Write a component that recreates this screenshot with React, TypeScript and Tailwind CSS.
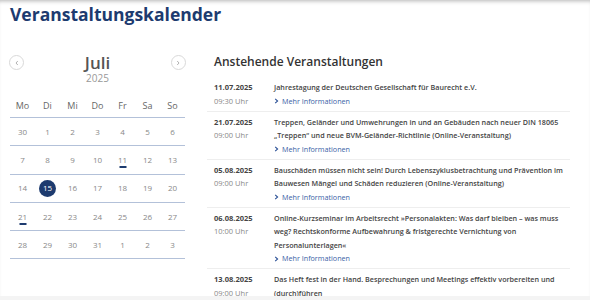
import React from "react";

const weeks: { d: number; today?: boolean; mark?: boolean }[][] = [
  [{ d: 30 }, { d: 1 }, { d: 2 }, { d: 3 }, { d: 4 }, { d: 5 }, { d: 6 }],
  [{ d: 7 }, { d: 8 }, { d: 9 }, { d: 10 }, { d: 11, mark: true }, { d: 12 }, { d: 13 }],
  [{ d: 14 }, { d: 15, today: true }, { d: 16 }, { d: 17 }, { d: 18 }, { d: 19 }, { d: 20 }],
  [{ d: 21, mark: true }, { d: 22 }, { d: 23 }, { d: 24 }, { d: 25 }, { d: 26 }, { d: 27 }],
  [{ d: 28 }, { d: 29 }, { d: 30 }, { d: 31 }, { d: 1 }, { d: 2 }, { d: 3 }],
];

const events = [
  {
    date: "11.07.2025",
    time: "09:30 Uhr",
    title: ["Jahrestagung der Deutschen Gesellschaft für Baurecht e.V."],
  },
  {
    date: "21.07.2025",
    time: "09:00 Uhr",
    title: [
      "Treppen, Geländer und Umwehrungen in und an Gebäuden nach neuer DIN 18065",
      "„Treppen“ und neue BVM-Geländer-Richtlinie (Online-Veranstaltung)",
    ],
  },
  {
    date: "05.08.2025",
    time: "09:00 Uhr",
    title: [
      "Bauschäden müssen nicht sein! Durch Lebenszyklusbetrachtung und Prävention im",
      "Bauwesen Mängel und Schäden reduzieren (Online-Veranstaltung)",
    ],
  },
  {
    date: "06.08.2025",
    time: "10:00 Uhr",
    title: [
      "Online-Kurzseminar im Arbeitsrecht »Personalakten: Was darf bleiben – was muss",
      "weg? Rechtskonforme Aufbewahrung & fristgerechte Vernichtung von",
      "Personalunterlagen«",
    ],
  },
  {
    date: "13.08.2025",
    time: "09:00 Uhr",
    title: [
      "Das Heft fest in der Hand. Besprechungen und Meetings effektiv vorbereiten und",
      "(durch)führen",
    ],
  },
];

function Arrow({ dir }: { dir: "l" | "r" }) {
  return (
    <div className="w-[15px] h-[15px] rounded-full border border-[#d9d9d9] flex items-center justify-center">
      <svg width="6" height="6" viewBox="0 0 6 6">
        {dir === "l" ? (
          <path d="M3.8 1 L2 3 L3.8 5" fill="none" stroke="#aaa" strokeWidth="0.9" />
        ) : (
          <path d="M2.2 1 L4 3 L2.2 5" fill="none" stroke="#aaa" strokeWidth="0.9" />
        )}
      </svg>
    </div>
  );
}

export default function App() {
  return (
    <div
      className="w-[590px] h-[300px] overflow-hidden bg-white flex flex-col shadow-[inset_0_4px_4px_-3px_rgba(0,0,0,0.3)]"
      style={{ fontFamily: '"Open Sans", sans-serif' }}
    >
      <div className="h-[296px] overflow-hidden">
        <h1 className="pl-[10px] pt-[2px] text-[17.5px] leading-[24px] font-bold text-[#1d3b6f]">
          Veranstaltungskalender
        </h1>
        <div className="flex mt-[28px]">
          {/* calendar */}
          <div className="w-[175px] ml-[10px]">
            <div className="flex items-start justify-between h-[40px]">
              <div className="mt-[1px] -ml-[1px]">
                <Arrow dir="l" />
              </div>
              <div className="flex flex-col items-center -mt-[1px]">
                <div className="text-[17px] leading-[20px] font-semibold text-[#555]">Juli</div>
                <div className="text-[10px] leading-[10px] text-[#999]">2025</div>
              </div>
              <div className="mt-[1px] -mr-[1px]">
                <Arrow dir="r" />
              </div>
            </div>
            <div className="grid grid-cols-7 h-[24px] items-center border-b border-[#b3c1d9] text-[9px] text-[#666]">
              {["Mo", "Di", "Mi", "Do", "Fr", "Sa", "So"].map((d) => (
                <div key={d} className="text-center">
                  {d}
                </div>
              ))}
            </div>
            {weeks.map((w, i) => (
              <div
                key={i}
                className="grid grid-cols-7 h-[28.3px] items-center border-b border-[#b3c1d9] text-[8px] text-[#888]"
              >
                {w.map((c, j) => (
                  <div key={j} className="flex justify-center">
                    {c.today ? (
                      <div className="w-[17px] h-[17px] rounded-full bg-[#1d3b6f] text-white flex items-center justify-center">
                        {c.d}
                      </div>
                    ) : (
                      <div className="relative">
                        {c.d}
                        {c.mark && (
                          <div className="absolute left-1/2 -translate-x-1/2 bottom-[-2px] w-[7px] h-[2px] bg-[#1d3b6f]" />
                        )}
                      </div>
                    )}
                  </div>
                ))}
              </div>
            ))}
          </div>
          {/* events */}
          <div className="ml-[22px] w-[363px]">
            <h2 className="pl-[7px] text-[12px] leading-[16px] font-semibold text-[#333]">
              Anstehende Veranstaltungen
            </h2>
            <div className="mt-[7px]">
              {events.map((e, i) => (
                <div key={i} className="flex border-b border-[#eeeeee] pl-[7px] pt-[4px] pb-[2.5px] text-[7.2px] leading-[13.5px]">
                  <div className="w-[60px] shrink-0 text-[7.5px]">
                    <div className="font-bold text-[#444]">{e.date}</div>
                    <div className="text-[#888]">{e.time}</div>
                  </div>
                  <div>
                    {e.title.map((t, k) => (
                      <div key={k} className="font-semibold text-[#444] whitespace-nowrap">
                        {t}
                      </div>
                    ))}
                    <div className="flex items-center gap-[3px] text-[#3a62a6]">
                      <svg width="5" height="6" viewBox="0 0 5 6">
                        <path d="M1.2 0.8 L3.6 3 L1.2 5.2" fill="none" stroke="#2a5096" strokeWidth="1.1" />
                      </svg>
                      <span>Mehr Informationen</span>
                    </div>
                  </div>
                </div>
              ))}
            </div>
          </div>
        </div>
      </div>
      <div className="flex-1 bg-[#f4f4f4]" />
    </div>
  );
}
